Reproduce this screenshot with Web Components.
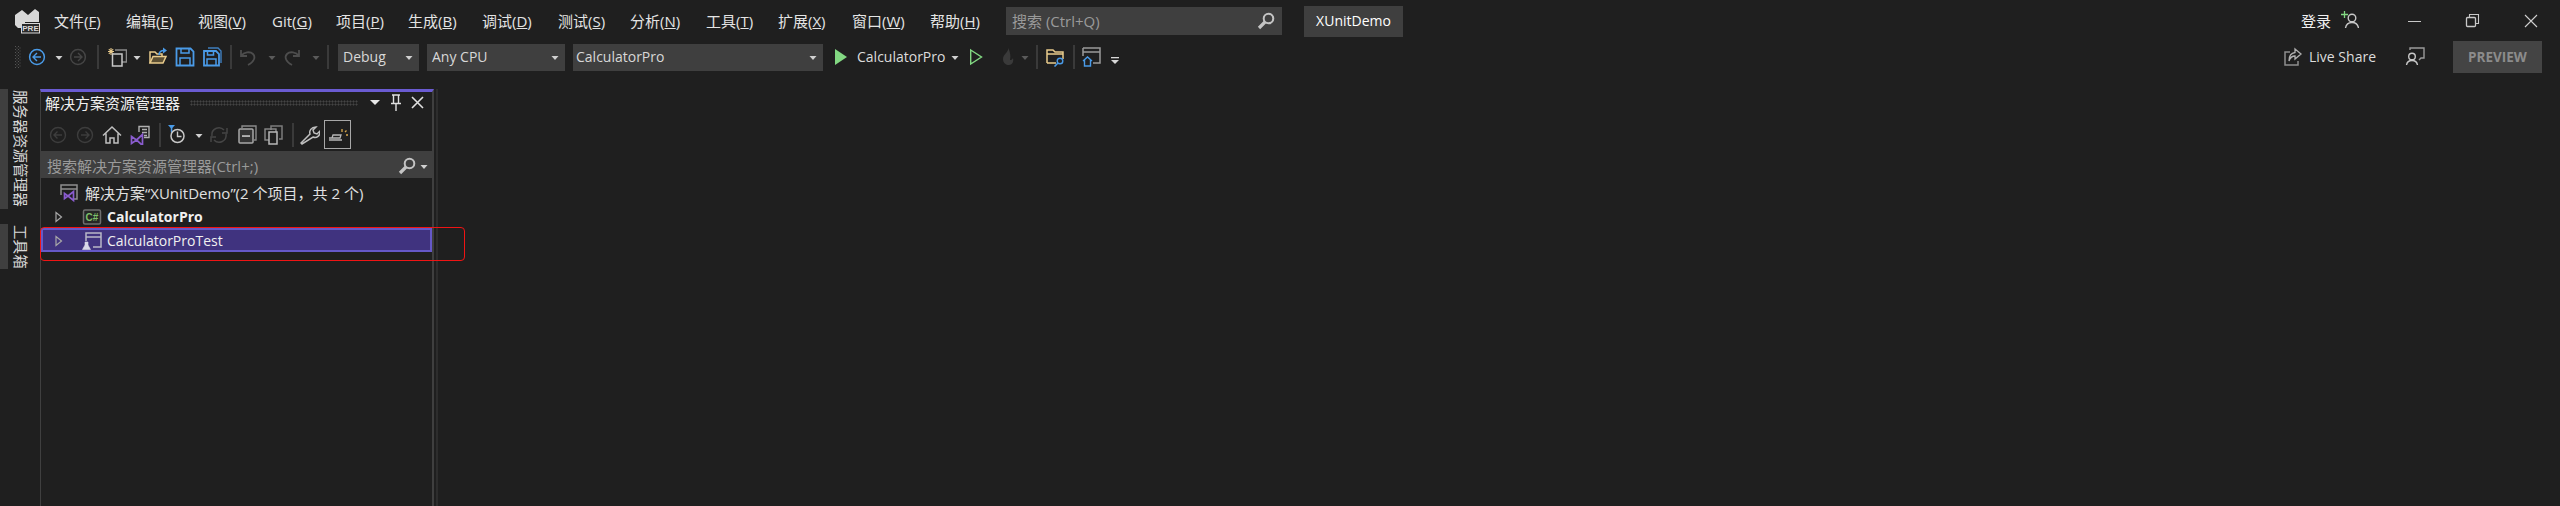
<!DOCTYPE html>
<html lang="zh-CN">
<head>
<meta charset="utf-8">
<title>XUnitDemo</title>
<style>
  html,body{margin:0;height:100%;background:#1f1f1f;overflow:hidden}
  body{font:15px/20px "Open Sans","Noto Sans CJK SC",sans-serif;color:#dcdcdc}
</style>
</head>
<body>
<vs-shell>
  <vs-titlebar>
    <vs-icon name="logo" w="26" h="26" style="margin-left:14px"></vs-icon>
    <vs-menu w="72" style="margin-left:14px">文件(<u>F</u>)</vs-menu>
    <vs-menu w="72">编辑(<u>E</u>)</vs-menu>
    <vs-menu w="74">视图(<u>V</u>)</vs-menu>
    <vs-menu w="64">Git(<u>G</u>)</vs-menu>
    <vs-menu w="72">项目(<u>P</u>)</vs-menu>
    <vs-menu w="74">生成(<u>B</u>)</vs-menu>
    <vs-menu w="76">调试(<u>D</u>)</vs-menu>
    <vs-menu w="72">测试(<u>S</u>)</vs-menu>
    <vs-menu w="76">分析(<u>N</u>)</vs-menu>
    <vs-menu w="72">工具(<u>T</u>)</vs-menu>
    <vs-menu w="74">扩展(<u>X</u>)</vs-menu>
    <vs-menu w="78">窗口(<u>W</u>)</vs-menu>
    <vs-menu w="76">帮助(<u>H</u>)</vs-menu>
    <vs-search w="276" style="height:28px">搜索 (Ctrl+Q)</vs-search>
    <vs-badge>XUnitDemo</vs-badge>
    <vs-spacer></vs-spacer>
    <span class="login">登录</span>
    <vs-icon name="person-add" style="margin-left:8px"></vs-icon>
    <vs-icon name="min" style="margin-left:46px"></vs-icon>
    <vs-icon name="restore" style="margin-left:38px"></vs-icon>
    <vs-icon name="close" style="margin-left:38px;margin-right:19px"></vs-icon>
  </vs-titlebar>

  <vs-toolbar>
    <vs-icon name="grip" w="6" h="22" style="margin-left:15px"></vs-icon>
    <vs-icon name="back" style="margin-left:6px"></vs-icon>
    <vs-icon name="caret" w="14" style="margin-left:5px"></vs-icon>
    <vs-icon name="forward" style="margin-left:2px"></vs-icon>
    <vs-sep style="margin-left:9px"></vs-sep>
    <vs-icon name="newproj" style="margin-left:8px"></vs-icon>
    <vs-icon name="caret" w="14" style="margin-left:3px"></vs-icon>
    <vs-icon name="open" style="margin-left:4px"></vs-icon>
    <vs-icon name="save" style="margin-left:7px"></vs-icon>
    <vs-icon name="saveall" style="margin-left:7px"></vs-icon>
    <vs-sep style="margin-left:8px"></vs-sep>
    <vs-icon name="undo" style="margin-left:6px"></vs-icon>
    <vs-icon name="caret-dim" w="14" style="margin-left:7px"></vs-icon>
    <vs-icon name="redo" style="margin-left:3px"></vs-icon>
    <vs-icon name="caret-dim" w="14" style="margin-left:7px"></vs-icon>
    <vs-sep style="margin-left:4px"></vs-sep>
    <vs-combo w="81" style="margin-left:9px">Debug</vs-combo>
    <vs-combo w="138" style="margin-left:8px">Any CPU</vs-combo>
    <vs-combo w="250" style="margin-left:8px;--pad:3px">CalculatorPro</vs-combo>
    <vs-icon name="play" style="margin-left:8px"></vs-icon>
    <span class="run">CalculatorPro</span>
    <vs-icon name="caret" w="14" style="margin-left:3px"></vs-icon>
    <vs-icon name="play-outline" style="margin-left:4px"></vs-icon>
    <vs-icon name="flame" style="margin-left:11px"></vs-icon>
    <vs-icon name="caret-dim" w="14" style="margin-left:1px"></vs-icon>
    <vs-sep style="margin-left:4px"></vs-sep>
    <vs-icon name="folder-search" style="margin-left:7px"></vs-icon>
    <vs-sep style="margin-left:8px"></vs-sep>
    <vs-icon name="window-home" style="margin-left:7px"></vs-icon>
    <vs-icon name="overflow" w="14" style="margin-left:6px"></vs-icon>
    <vs-spacer></vs-spacer>
    <vs-icon name="liveshare" style="margin-right:6px"></vs-icon>
    <span class="share">Live Share</span>
    <vs-icon name="feedback" style="margin-left:29px"></vs-icon>
    <vs-preview>PREVIEW</vs-preview>
  </vs-toolbar>

  <vs-workspace>
    <vs-rail>
      <vs-rail-tab h="120">服务器资源管理器</vs-rail-tab>
      <vs-rail-tab h="45">工具箱</vs-rail-tab>
    </vs-rail>
    <vs-explorer>
      <vs-tree-row kind="solution" icon="solution">解决方案“XUnitDemo”(2 个项目，共 2 个)</vs-tree-row>
      <vs-tree-row kind="project" icon="csharp" bold>CalculatorPro</vs-tree-row>
      <vs-tree-row kind="project" icon="testproj" selected>CalculatorProTest</vs-tree-row>
    </vs-explorer>
    <vs-marker></vs-marker>
  </vs-workspace>
</vs-shell>

<script>
(function () {
  var GRAY = '#c8c8c8', DIM = '#454545', BLUE = '#4a9be8', GREEN = '#82d882', YEL = '#e9cb8c', PURPLE = '#8a5ccf';
  function line(d, c, w) { return '<path d="' + d + '" fill="none" stroke="' + c + '" stroke-width="' + (w || 1.4) + '"/>'; }

  var dots = '';
  for (var gy = 0; gy < 22; gy += 3) dots += '<rect x="0" y="' + gy + '" width="1" height="1" fill="#555"/><rect x="3" y="' + gy + '" width="1" height="1" fill="#555"/><rect x="1.5" y="' + (gy + 1.5) + '" width="1" height="1" fill="#555"/><rect x="4.5" y="' + (gy + 1.5) + '" width="1" height="1" fill="#555"/>';

  var ICONS = {
    logo: '<path d="M1 7 8 2l6 5 7-6 4 3v10H11v6H4L1 17z" fill="#d8d8d8"/><rect x="7.5" y="15.5" width="18" height="9.5" fill="#2a2a2a" stroke="#d8d8d8"/><text x="16.5" y="23.3" font-family="Liberation Sans" font-size="8" font-weight="700" text-anchor="middle" fill="#d8d8d8">PRE</text>',
    grip: dots,
    back: '<circle cx="10" cy="10" r="7.4" fill="none" stroke="' + BLUE + '" stroke-width="1.5"/>' + line('M14 10H6.5M10 6 6 10l4 4', BLUE),
    forward: '<circle cx="10" cy="10" r="7.4" fill="none" stroke="' + DIM + '" stroke-width="1.5"/>' + line('M6 10h7.5M10 6l4 4-4 4', DIM),
    caret: '<path d="M3.5 9h7L7 13z" fill="#d0d0d0"/>',
    'caret-dim': '<path d="M3.5 9h7L7 13z" fill="#5a5a5a"/>',
    newproj: '<path d="M4 1v7M1 4.500h6M1.800 2l4.500 5M6.200 2 1.800 7" stroke="' + YEL + '" stroke-width="1.100" fill="none"/>' + line('M8 3h11.500v12H15', '#8a8a8a', 1.5) + '<rect x="5.500" y="7" width="9.500" height="12" fill="#1f1f1f" stroke="' + GRAY + '" stroke-width="1.500"/>',
    open: line('M2 16V5h5l2 2h5v2', YEL, 1.5) + '<path d="M2 16 5 9.500h13L15 16z" fill="#5c4f33" stroke="' + YEL + '" stroke-width="1.500"/>' + line('M11 8c0-3 2-4.500 5-4.500', BLUE, 1.6) + '<path d="M15 .5l4 3-4 3z" fill="' + BLUE + '"/>',
    save: '<path d="M1.500 1.500h14l3 3v14h-17z" fill="none" stroke="' + BLUE + '" stroke-width="1.800"/>' + line('M6 1.500V6h8V1.500M5 18.500V11h10v7.500', BLUE, 1.5),
    saveall: line('M6 1h10l3 3v12', '#3f7fbf', 1.4) + '<path d="M2 4h12l3 3v11.500H2z" fill="none" stroke="' + BLUE + '" stroke-width="1.800"/>' + line('M5.500 4v4h6V4M5 18.500V12h9v6.500', BLUE, 1.5),
    undo: line('M3 3v6h6M3 9c3-4 9-5 12-2 3 3 1 8-5 11', '#4d4d4d', 1.8),
    redo: line('M17 3v6h-6M17 9c-3-4-9-5-12-2-3 3-1 8 5 11', '#4d4d4d', 1.8),
    play: '<path d="M4 2 16 10 4 18z" fill="' + GREEN + '"/>',
    'play-outline': '<path d="M4.700 3 15.500 10 4.700 17z" fill="none" stroke="' + GREEN + '" stroke-width="1.400"/>',
    flame: '<path d="M11 1c1 4-5 6-5 11 0 4 3 6 6 6 3 0 5-3 4-7-1 2-2 2-3 2 1-4 0-9-2-12z" fill="#3a3a3a"/>',
    'folder-search': line('M2 16V3h6l2 2h8v7', YEL, 1.5) + line('M2 7h16M2 16h9', YEL, 1.5) + '<circle cx="15" cy="14" r="2.800" fill="none" stroke="' + BLUE + '" stroke-width="1.400"/>' + line('M13 16l-3.500 3.500', BLUE, 1.6),
    'window-home': line('M1 1h17v15h-7M1 1v8M1 5h17', '#9a9a9a', 1.5) + '<path d="M1 14l4.500-4 4.500 4M2.500 13v6h6v-6" fill="none" stroke="' + BLUE + '" stroke-width="1.400"/>',
    overflow: '<rect x="3" y="10" width="8" height="1.300" fill="#d8d8d8"/><path d="M3 13h8l-4 4z" fill="#d8d8d8"/>',
    'person-add': line('M2 3.500h7M5.500 0v7', GREEN, 1.3) + '<circle cx="13" cy="7" r="3.800" fill="none" stroke="' + GRAY + '" stroke-width="1.400"/>' + line('M6.500 17c.5-3 3-5.500 6.500-5.500s6 2.500 6.500 5.500', GRAY, 1.4),
    min: '<rect x="3" y="10" width="13" height="1" fill="' + GRAY + '"/>',
    restore: '<rect x="3.500" y="6.500" width="9" height="9" rx="1" fill="none" stroke="' + GRAY + '" stroke-width="1.300"/>' + line('M6.500 6V3.500h9v9H13', GRAY, 1.100),
    close: line('M4 4l12 12M16 4 4 16', '#d0d0d0', 1.1),
    liveshare: line('M7 5H2v13h13v-4', '#8f8f8f', 1.5) + '<path d="M12 2l6 5-6 5V9C9 9 7 11 6 14c0-5 2-8 6-8.500z" fill="none" stroke="#b0b0b0" stroke-width="1.300"/>',
    feedback: line('M5 3V1h14v10h-3l-2 2', '#9a9a9a', 1.4) + '<circle cx="7" cy="9.500" r="3.300" fill="none" stroke="' + GRAY + '" stroke-width="1.400"/>' + line('M1.500 18c.5-3 2.500-4.500 5.500-4.500s5 1.500 5.500 4.500', GRAY, 1.4),
    nav: '<circle cx="10" cy="10" r="7.500" fill="none" stroke="#3d3d3d" stroke-width="1.400"/>' + line('M14 10H6.500M9.500 6.500 6 10l3.500 3.500', '#3d3d3d'),
    navf: '<circle cx="10" cy="10" r="7.500" fill="none" stroke="#3d3d3d" stroke-width="1.400"/>' + line('M6 10h7.500M10.500 6.500 14 10l-3.500 3.500', '#3d3d3d'),
    home: line('M1 10.500 10 2l9 8.500M4 8.500V18h4v-5h4v5h4V8.500', '#c0c0c0', 1.5),
    vsswitch: line('M9 7V1.500h10v11h-5M12 4.500h5M12 7.500h5M14 10.500h3', '#b0b0b0', 1.4) + line('M1.500 11.500 6.500 15l-5 3.500zM6.500 15 12.500 9.500v11z', PURPLE, 1.7),
    history: '<path d="M1 0h7L4.500 4z" fill="' + BLUE + '"/><rect x="3.800" y="2.500" width="1.500" height="5" fill="' + BLUE + '"/><circle cx="10.500" cy="11" r="6.500" fill="none" stroke="' + GRAY + '" stroke-width="1.500"/>' + line('M10.500 6.500V11.500H14.500', GRAY, 1.4),
    refresh: line('M3 11A7 7 0 0 1 15 5M18 3v5h-5M17 9A7 7 0 0 1 5 15M2 17v-5h5', '#454545', 1.5),
    collapse: line('M5 3V1h14v14h-2', '#8a8a8a', 1.4) + '<rect x="2" y="4" width="14" height="14" rx="1" fill="#333" stroke="#a8a8a8" stroke-width="1.500"/><rect x="5" y="10.300" width="8" height="1.500" fill="#d0d0d0"/>',
    copies: line('M8 5V1h11v13h-3', '#7c7c7c', 1.5) + '<rect x="2" y="4" width="11" height="11" fill="none" stroke="#8a8a8a" stroke-width="1.400"/><rect x="6" y="7" width="8" height="12" fill="#1f1f1f" stroke="#b8b8b8" stroke-width="1.500"/>',
    wrench: '<path d="M2 19 1 18l9-9c-1-3 1-7 6-7l-3 3 1 3 3 1 3-3c.5 5-3.500 7.500-7 6z" fill="none" stroke="#c0c0c0" stroke-width="1.500"/>',
    preview: '<path d="M1 13h11l1-3H5l-1 3M1 15h13" fill="none" stroke="#b8b8b8" stroke-width="1.300"/><path d="M14 4v3M18 10h2M17 7l1.500-1.500" stroke="#d8a94f" stroke-width="1.300" fill="none"/>',
    mag: '<circle cx="12.500" cy="7.500" r="4.800" fill="none" stroke="#c4c4c4" stroke-width="2"/><path d="M9 11 3 17" stroke="#c4c4c4" stroke-width="3.200"/>',
    chevron: '<path d="M7 5.500 12.500 10 7 14.500z" fill="none" stroke="#a8a8a8" stroke-width="1.200"/>',
    solution: line('M2 12V2h16v14h-4M2 6h16', '#8e8e8e', 1.500) + line('M5.500 10.500 9 13l-3.500 2.500zM9 13 14.500 8.500v9z', PURPLE, 1.7),
    csharp: '<rect x="1.500" y="3" width="17" height="14" rx="1.500" fill="#262626" stroke="#6f6f6f" stroke-width="1.500"/><text x="10" y="14" font-family="Liberation Sans" font-size="10" font-weight="700" text-anchor="middle" fill="#7fbf6a">C#</text>',
    testproj: line('M4 10V2h15v14h-8M4 6h15', '#b8b8c8', 1.500) + '<path d="M3 11h3v3l2.500 4.500h-8L3 14z" fill="#d8d8e8" stroke="#d8d8e8" stroke-width=".6"/>',
    pin: line('M5 2h8M6.500 2v8M11.500 2v8M4 10.500h10M9 10.500V18', '#e0e0e0', 1.4),
    xclose: line('M3 4l11 11M14 4 3 15', '#e0e0e0', 1.6),
    tri: '<path d="M2 7h10L7 12z" fill="#e8e8e8"/>'
  };

  function make(tag, css, html) {
    customElements.define(tag, class extends HTMLElement {
      connectedCallback() {
        if (this._m) return; this._m = true;
        var root = this.attachShadow({ mode: 'open' });
        root.innerHTML = '<style>' + css + '</style>' + (typeof html === 'function' ? html(this) : html);
      }
    });
  }

  make('vs-icon', ':host{display:block;flex:none;line-height:0}svg{display:block}', function (el) {
    var w = el.getAttribute('w') || 20, h = el.getAttribute('h') || 20, n = el.getAttribute('name');
    return '<svg width="' + w + '" height="' + h + '" viewBox="0 0 ' + w + ' ' + h + '">' + (ICONS[n] || '') + '</svg>';
  });

  make('vs-spacer', ':host{display:block;flex:1}', '');
  make('vs-sep', ':host{display:block;flex:none;width:2px;height:24px;background:#3a3a3a}', '');

  make('vs-shell', ':host{display:flex;flex-direction:column;width:2560px;height:506px;background:#1f1f1f}', '<slot></slot>');

  make('vs-titlebar', `:host{display:flex;align-items:center;height:42px;flex:none}
    ::slotted(.login){font-size:15px;color:#f0f0f0}`, '<slot></slot>');

  make('vs-menu', `:host{display:block;flex:none;font-size:15px;line-height:20px;color:#e4e4e4;white-space:nowrap}
    ::slotted(u){text-underline-offset:1px}`, function (el) {
    el.style.width = el.getAttribute('w') + 'px';
    return '<slot></slot>';
  });

  make('vs-search', `:host{display:flex;align-items:center;flex:none;height:27px;background:#3f3f3f;color:#9a9a9a;
      box-sizing:border-box;padding:0 6px;font-size:15px;white-space:nowrap}
    .t{flex:1;overflow:hidden}`, function (el) {
    el.style.width = el.getAttribute('w') + 'px';
    return '<span class="t"><slot></slot></span><vs-icon name="mag"></vs-icon>';
  });

  make('vs-badge', `:host{display:flex;align-items:center;justify-content:center;flex:none;width:99px;height:31px;margin-left:22px;
      background:#3f3f3f;color:#fff;font-size:14px}`, '<slot></slot>');

  make('vs-toolbar', `:host{display:flex;align-items:center;height:30px;flex:none;white-space:nowrap}
    ::slotted(.run){margin-left:6px;color:#dcdcdc;font-size:14px}
    ::slotted(.share){color:#dcdcdc;font-size:14px}`, '<slot></slot>');

  make('vs-combo', `:host{display:flex;align-items:center;flex:none;height:27px;box-sizing:border-box;background:#3f3f3f;color:#d8d8d8;
      padding:0 3px 0 var(--pad,5px);font-size:14px}
    .t{flex:1}`, function (el) {
    el.style.width = el.getAttribute('w') + 'px';
    return '<span class="t"><slot></slot></span><vs-icon name="caret" w="14"></vs-icon>';
  });

  make('vs-preview', `:host{display:flex;align-items:center;justify-content:center;flex:none;width:89px;height:32px;margin:0 18px 0 28px;
      background:#444;color:#8c8c8c;font:700 13.500px/20px "Open Sans",sans-serif}`, '<slot></slot>');

  make('vs-workspace', ':host{display:flex;position:relative;flex:1;margin-top:17px;min-height:0}', '<slot></slot>');

  make('vs-rail', ':host{display:flex;flex-direction:column;flex:none;width:40px;gap:15px}', '<slot></slot>');

  make('vs-rail-tab', `:host{display:block;align-self:flex-start;box-sizing:border-box;border-left:8px solid #3f3f3f;padding:1px 0 0 6px;
      writing-mode:vertical-rl;text-orientation:sideways;font-size:14.600px;line-height:14px;color:#d8d8d8;white-space:nowrap}`, function (el) {
    el.style.height = el.getAttribute('h') + 'px';
    return '<slot></slot>';
  });

  make('vs-explorer', `:host{display:flex;flex-direction:column;flex:none;width:394px;box-sizing:border-box;height:100%;
      border-top:3px solid #6a5bd2;border-left:1px solid #3f3f3f;border-right:2px solid #3f3f3f;position:relative}
    .title{display:flex;align-items:center;box-sizing:border-box;height:26px;padding:0 0 4px 4px;font-size:15px;color:#f0f0f0;white-space:nowrap}
    .grip{flex:none;width:168px;height:6px;margin-left:10px;
      background-image:radial-gradient(#444 45%,transparent 50%);background-size:3px 3px}
    .tools{display:flex;align-items:center;height:33px}
    .sep{flex:none;width:2px;height:24px;background:#3a3a3a}
    .toggle{flex:none;box-sizing:border-box;width:27px;height:29px;border:1px solid #a8a8a8;display:flex;align-items:center;justify-content:center;margin-left:4px}
    .search{display:flex;align-items:center;box-sizing:border-box;height:27px;background:#3f3f3f;color:#9a9a9a;padding:2px 0 0 6px;font-size:15px;white-space:nowrap}
    .search .t{flex:1}
    .tree{padding-top:2px;font-size:15px}
    .after{position:absolute;top:-3px;bottom:0;right:-6px;width:2px;background:#2d2d2d}`,
    `<div class="title">解决方案资源管理器<span class="grip"></span>
       <vs-icon name="tri" w="14" style="margin-left:10px"></vs-icon>
       <vs-icon name="pin" w="18" style="margin-left:5px"></vs-icon>
       <vs-icon name="xclose" w="17" style="margin-left:4px"></vs-icon></div>
     <div class="tools">
       <vs-icon name="nav" style="margin-left:7px"></vs-icon>
       <vs-icon name="navf" style="margin-left:7px"></vs-icon>
       <vs-icon name="home" style="margin-left:7px"></vs-icon>
       <vs-icon name="vsswitch" style="margin-left:8px"></vs-icon>
       <span class="sep" style="margin-left:9px"></span>
       <vs-icon name="history" style="margin-left:6px"></vs-icon>
       <vs-icon name="caret" w="14" style="margin-left:5px"></vs-icon>
       <vs-icon name="refresh" style="margin-left:3px"></vs-icon>
       <vs-icon name="collapse" style="margin-left:8px"></vs-icon>
       <vs-icon name="copies" style="margin-left:6px"></vs-icon>
       <span class="sep" style="margin-left:9px"></span>
       <vs-icon name="wrench" style="margin-left:6px"></vs-icon>
       <span class="toggle"><vs-icon name="preview"></vs-icon></span>
     </div>
     <div class="search"><span class="t">搜索解决方案资源管理器(Ctrl+;)</span>
       <vs-icon name="mag"></vs-icon><vs-icon name="caret" w="14" style="margin-right:1px"></vs-icon></div>
     <div class="tree"><slot></slot></div>
     <div class="after"></div>`);

  make('vs-tree-row', `:host{display:flex;align-items:center;box-sizing:border-box;height:24px;padding-top:2px;color:#e0e0e0;white-space:nowrap;border:2px solid transparent}
    :host([selected]){background:#40337f;border-color:#6558c8;color:#f0f0f0}
    :host([bold]){font-weight:700;color:#f0f0f0}
    :host([kind=solution]){padding-left:16px}
    :host([kind=solution]) .t{margin-left:6px}
    :host([kind=project]){padding-left:6px;font-size:14px}
    .t{margin-left:5px}`, function (el) {
    var chev = el.getAttribute('kind') === 'project' ? '<vs-icon name="chevron"></vs-icon><span style="width:13px"></span>' : '';
    return chev + '<vs-icon name="' + el.getAttribute('icon') + '"></vs-icon><span class="t"><slot></slot></span>';
  });

  // the red annotation box drawn over the selected row
  make('vs-marker', ':host{position:absolute;left:40px;top:138px;width:425px;height:34px;box-sizing:border-box;border:1.500px solid #f01414;border-radius:4px;pointer-events:none}', '');
})();
</script>
</body>
</html>
